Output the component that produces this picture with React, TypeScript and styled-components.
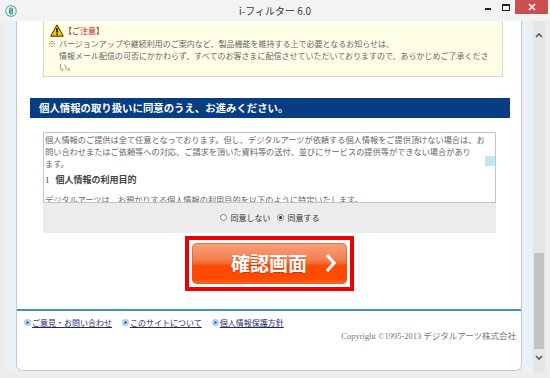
import React from 'react'
import styled, { createGlobalStyle } from 'styled-components'

const jp = `"Noto Sans CJK JP", "Noto Sans", sans-serif`
const serifJp = `"Liberation Serif", "Noto Sans CJK JP", serif`

const GlobalStyle = createGlobalStyle`
    html, body {
        margin: 0;
        padding: 0;
        background: #ededed;
    }
    body {
        font-family: ${jp};
    }
`

const Window = styled.div`
    width: 550px;
    height: 378px;
    display: flex;
    flex-direction: column;
    background: #ededed;
    overflow: hidden;
`

const TitleBar = styled.div`
    flex: none;
    height: 21px;
    display: grid;
    grid-template-columns: 1fr auto 1fr;
    align-items: center;
    background: #f3f3f3;
`

const AppIcon = styled.div`
    display: flex;
    padding-left: 5px;
`

const Title = styled.div`
    font-size: 10px;
    line-height: 21px;
    color: #3a3a3a;
`

const WindowButtons = styled.div`
    justify-self: end;
    align-self: start;
    display: flex;
    margin-right: 2px;
`

const WinButton = styled.div<{ $close?: boolean }>`
    width: ${p => (p.$close ? 33 : 18)}px;
    height: 14px;
    display: flex;
    align-items: center;
    justify-content: center;
    background: ${p => (p.$close ? '#c9504e' : 'transparent')};
`

const MinGlyph = styled.span`
    width: 6px;
    height: 2px;
    margin-top: 4px;
    background: #222;
`

const MaxGlyph = styled.span`
    width: 6px;
    height: 4px;
    border: 1px solid #222;
    border-top-width: 2px;
`

const Body = styled.div`
    flex: 1;
    min-height: 0;
    display: flex;
    padding: 0 5px 5px 5px;
`

const Viewport = styled.div`
    flex: 1;
    display: flex;
    flex-direction: column;
    padding: 0 11px 2px 11px;
    background: #e9f1f7;
    overflow: hidden;
`

const Card = styled.div<{ $scroll: number }>`
    flex: 1;
    margin-top: ${p => -p.$scroll}px;
    display: flex;
    flex-direction: column;
    background: #fff;
    border: 1px solid #c9c9c9;
    border-top: none;
    border-radius: 0 0 6px 6px;
`

const Notice = styled.div`
    width: 460px;
    box-sizing: border-box;
    margin-left: 26px;
    padding: 12px 6px 3px 4px;
    background: #fffee6;
    border: 1px solid #d6d6c6;
    color: #666;
    font-size: 8px;
`

const NoticeHead = styled.div`
    display: flex;
    align-items: center;
    height: 13px;
    margin-bottom: 1px;
    padding-left: 2px;
`

const NoticeLabel = styled.span`
    color: #c8102e;
    line-height: 11px;
`

const NoticeRow = styled.div`
    display: flex;
    line-height: 11.5px;
`

const Mark = styled.span`
    flex: none;
    width: 11px;
`

const NoticeText = styled.div`
    flex: 1;
    white-space: nowrap;
`

const SectionBar = styled.div`
    width: 480px;
    height: 20px;
    margin: 21px 0 0 13px;
    padding-left: 9px;
    box-sizing: border-box;
    background: #073d83;
    color: #fff;
    font-size: 10.4px;
    font-weight: bold;
    line-height: 20px;
`

const Consent = styled.div`
    width: 453px;
    margin: 14px 0 0 26px;
`

const TermsBox = styled.div`
    height: 71px;
    box-sizing: border-box;
    display: flex;
    border: 1px solid #c4c4c4;
    background: #fff;
`

const TermsText = styled.div`
    flex: 1;
    overflow: hidden;
    padding-left: 1px;
    color: #666;
    font-size: 8.2px;
    line-height: 12px;
    white-space: nowrap;
`

const TermsHeading = styled.div`
    margin-top: 4px;
    color: #444;
    font-size: 9px;
    font-weight: bold;
    line-height: 13px;
`

const SectionNo = styled.span`
    font-family: ${serifJp};
    font-weight: normal;
    margin-right: 6px;
`

const TermsPara = styled.div<{ $gap?: number }>`
    margin-top: ${p => p.$gap || 0}px;
`

const InnerScroll = styled.div`
    flex: none;
    width: 11px;
    display: flex;
    justify-content: flex-end;
`

const InnerThumb = styled.div`
    width: 10px;
    height: 10px;
    margin-top: 23px;
    background: #c4e3f3;
`

const RadioBar = styled.div`
    height: 30px;
    display: flex;
    align-items: center;
    justify-content: center;
    gap: 6px;
    background: #ececec;
    font-size: 8px;
    color: #333;
`

const RadioItem = styled.label`
    display: flex;
    align-items: center;
    gap: 4px;
    line-height: 12px;
`

const RadioDot = styled.span<{ $checked?: boolean }>`
    width: 7px;
    height: 7px;
    box-sizing: border-box;
    border-radius: 50%;
    border: 1px solid #7c7c7c;
    background: #fff;
    display: flex;
    align-items: center;
    justify-content: center;
    &::after {
        content: '';
        width: 3px;
        height: 3px;
        border-radius: 50%;
        background: ${p => (p.$checked ? '#222' : 'transparent')};
    }
`

const ButtonFrame = styled.div`
    width: 169px;
    height: 55px;
    box-sizing: border-box;
    margin: 3px auto 0;
    padding: 3px;
    border: 4px solid #ee0000;
    background: #fff;
`

const ConfirmButton = styled.div`
    height: 100%;
    display: grid;
    grid-template-columns: 1fr auto 1fr;
    align-items: center;
    border-radius: 5px;
    background: linear-gradient(#f9a27c 0%, #f4804f 40%, #f6672e 50%, #fd4a05 55%, #ff4a00 88%, #ff6b30 100%);
    box-shadow: inset 0 0 0 1px rgba(226, 80, 30, 0.6);
    color: #fff;
    font-size: 19px;
    font-weight: bold;
    text-shadow: 0 1px 1px rgba(160, 40, 0, 0.5);
`

const ButtonLabel = styled.span`
    grid-column: 2;
    line-height: 28px;
`

const ButtonArrow = styled.span`
    justify-self: end;
    display: flex;
    margin-right: 11px;
`

const FooterRule = styled.div`
    height: 2px;
    margin-top: 18px;
    background: #3d8fd1;
`

const FooterLinks = styled.div`
    display: flex;
    gap: 10px;
    margin-top: 6px;
    padding-left: 7px;
`

const FooterLink = styled.a`
    display: flex;
    align-items: center;
    gap: 1px;
    color: #1f2a6e;
    font-size: 8px;
    line-height: 12px;
    text-decoration: underline;
`

const Copyright = styled.div`
    margin-top: 1px;
    padding-right: 5px;
    text-align: right;
    font-family: ${serifJp};
    font-size: 8.5px;
    line-height: 13px;
    color: #777;
`

const Scrollbar = styled.div`
    flex: none;
    width: 12px;
    display: flex;
    flex-direction: column;
    background: #e6e6e6;
`

const ScrollArrow = styled.div<{ $down?: boolean }>`
    flex: none;
    height: ${p => (p.$down ? 24 : 28)}px;
    display: flex;
    justify-content: center;
    align-items: ${p => (p.$down ? 'flex-start' : 'center')};
    padding-top: ${p => (p.$down ? 6 : 0)}px;
    box-sizing: border-box;
`

const ScrollTrack = styled.div`
    flex: 1;
    display: flex;
    flex-direction: column;
    justify-content: flex-end;
    align-items: center;
`

const ScrollThumb = styled.div`
    width: 10px;
    height: 96px;
    background: #c3c3c3;
`

const AppGlyph = () => (
    <svg width="12" height="12" viewBox="0 0 12 12">
        <circle cx="6" cy="6" r="5.3" fill="#eef5fc" stroke="#7aa3d6" strokeWidth="1.2" />
        <rect x="4" y="2.4" width="4" height="7.2" rx="2" fill="#1f9a45" />
        <path d="M7 4.2 C6 3.5 4.9 4 5.2 4.9 C5.4 5.8 7 5.8 6.9 7.1 C6.8 7.9 5.5 8.1 5 7.5" fill="none" stroke="#fff" strokeWidth="0.8" />
    </svg>
)

const CloseGlyph = () => (
    <svg width="8" height="8" viewBox="0 0 8 8">
        <path d="M1 1 L7 7 M7 1 L1 7" stroke="#fff" strokeWidth="1.6" />
    </svg>
)

const WarningGlyph = () => (
    <svg width="14" height="13" viewBox="0 0 14 13">
        <path d="M7 0.9 L13.3 12.2 H0.7 Z" fill="#f6c300" stroke="#3a2c00" strokeWidth="1" strokeLinejoin="round" />
        <rect x="6.2" y="4" width="1.6" height="4.6" fill="#111" />
        <rect x="6.2" y="9.5" width="1.6" height="1.6" fill="#111" />
    </svg>
)

const LinkGlyph = () => (
    <svg width="7" height="7" viewBox="0 0 7 7">
        <circle cx="3.5" cy="3.5" r="3.2" fill="#bddcf4" stroke="#82b3de" strokeWidth="0.5" />
        <path d="M2.6 1.8 L5.3 3.5 L2.6 5.2 Z" fill="#1d4f9c" />
    </svg>
)

const ArrowGlyph = () => (
    <svg width="11" height="20" viewBox="0 0 11 20">
        <polyline points="2,2 9,10 2,18" fill="none" stroke="#fff" strokeWidth="3.2" strokeLinejoin="miter" />
    </svg>
)

const Chevron = ({ down }: { down?: boolean }) => (
    <svg width="8" height="5" viewBox="0 0 8 5">
        <polyline
            points={down ? '1,1 4,4 7,1' : '1,4 4,1 7,4'}
            fill="none"
            stroke="#555"
            strokeWidth="1.6"
        />
    </svg>
)

const links = ['ご意見・お問い合わせ', 'このサイトについて', '個人情報保護方針']

export default function App() {
    return (
        <Window>
            <GlobalStyle />
            <TitleBar>
                <AppIcon>
                    <AppGlyph />
                </AppIcon>
                <Title>i-フィルター 6.0</Title>
                <WindowButtons>
                    <WinButton><MinGlyph /></WinButton>
                    <WinButton><MaxGlyph /></WinButton>
                    <WinButton $close><CloseGlyph /></WinButton>
                </WindowButtons>
            </TitleBar>
            <Body>
                <Viewport>
                    <Card $scroll={10}>
                        <Notice>
                            <NoticeHead>
                                <WarningGlyph />
                                <NoticeLabel>【ご注意】</NoticeLabel>
                            </NoticeHead>
                            <NoticeRow>
                                <Mark>※</Mark>
                                <NoticeText>
                                    バージョンアップや継続利用のご案内など、製品機能を維持する上で必要となるお知らせは、<br />
                                    情報メール配信の可否にかかわらず、すべてのお客さまに配信させていただいておりますので、あらかじめご了承くださ<br />
                                    い。
                                </NoticeText>
                            </NoticeRow>
                        </Notice>

                        <SectionBar>個人情報の取り扱いに同意のうえ、お進みください。</SectionBar>

                        <Consent>
                            <TermsBox>
                                <TermsText>
                                    <TermsPara>
                                        個人情報のご提供は全て任意となっております。但し、デジタルアーツが依頼する個人情報をご提供頂けない場合は、お<br />
                                        問い合わせまたはご依頼等への対応、ご請求を頂いた資料等の送付、並びにサービスの提供等ができない場合があり<br />
                                        ます。
                                    </TermsPara>
                                    <TermsHeading>
                                        <SectionNo>1</SectionNo>個人情報の利用目的
                                    </TermsHeading>
                                    <TermsPara $gap={6}>
                                        デジタルアーツは、お預かりする個人情報の利用目的を以下のように特定いたします。
                                    </TermsPara>
                                </TermsText>
                                <InnerScroll>
                                    <InnerThumb />
                                </InnerScroll>
                            </TermsBox>
                            <RadioBar>
                                <RadioItem>
                                    <RadioDot />
                                    同意しない
                                </RadioItem>
                                <RadioItem>
                                    <RadioDot $checked />
                                    同意する
                                </RadioItem>
                            </RadioBar>
                        </Consent>

                        <ButtonFrame>
                            <ConfirmButton>
                                <ButtonLabel>確認画面</ButtonLabel>
                                <ButtonArrow>
                                    <ArrowGlyph />
                                </ButtonArrow>
                            </ConfirmButton>
                        </ButtonFrame>

                        <FooterRule />
                        <FooterLinks>
                            {links.map(label => (
                                <FooterLink key={label} href="#">
                                    <LinkGlyph />
                                    {label}
                                </FooterLink>
                            ))}
                        </FooterLinks>
                        <Copyright>Copyright ©1995-2013 デジタルアーツ株式会社</Copyright>
                    </Card>
                </Viewport>
                <Scrollbar>
                    <ScrollArrow>
                        <Chevron />
                    </ScrollArrow>
                    <ScrollTrack>
                        <ScrollThumb />
                    </ScrollTrack>
                    <ScrollArrow $down>
                        <Chevron down />
                    </ScrollArrow>
                </Scrollbar>
            </Body>
        </Window>
    )
}
